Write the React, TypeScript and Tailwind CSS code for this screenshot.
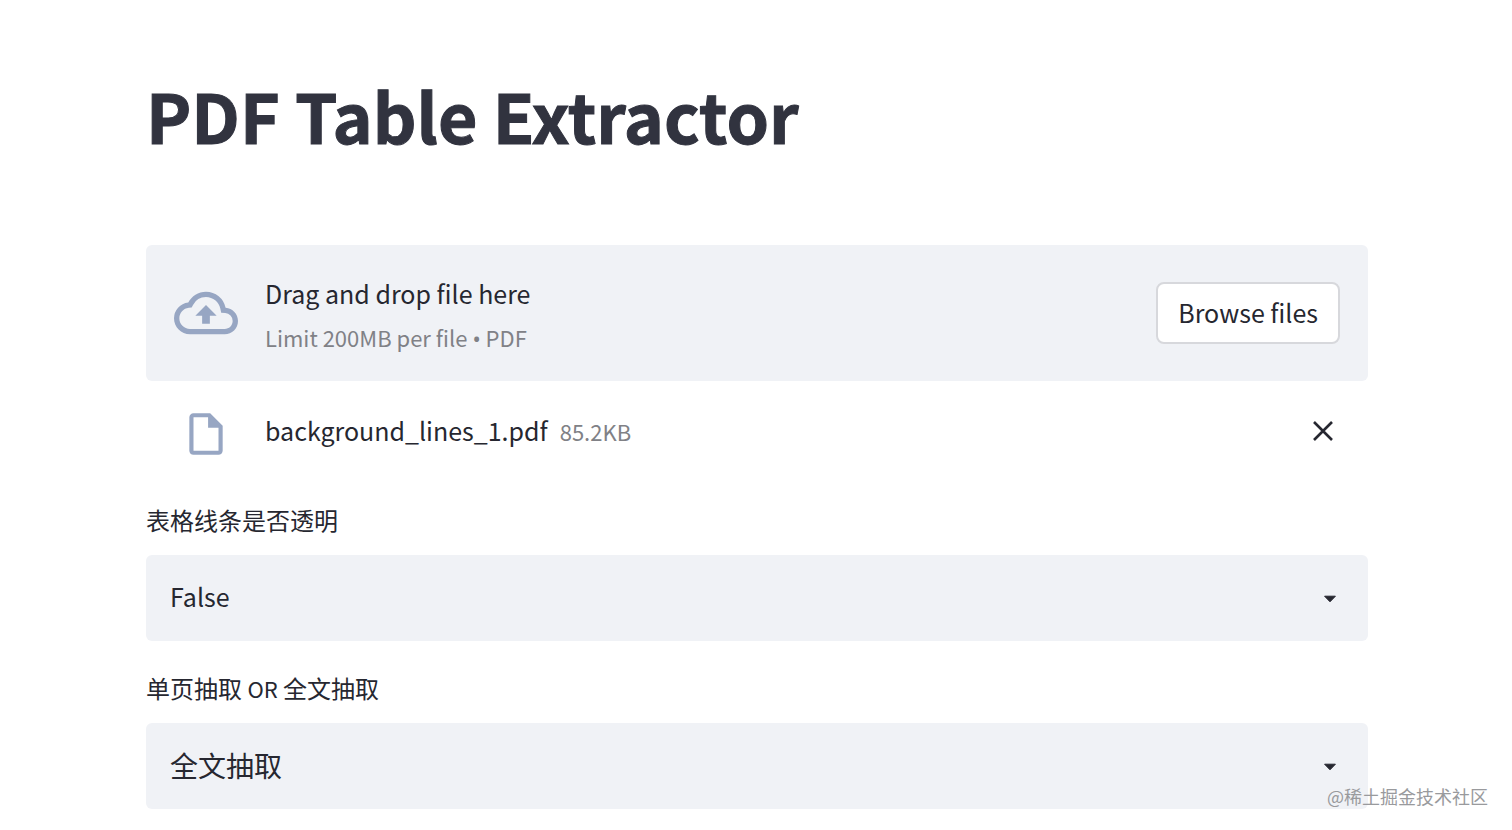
import { useId, useRef, useState } from 'react';
import { MdOutlineCloudUpload, MdOutlineInsertDriveFile } from 'react-icons/md';

const SelectField = ({
  label,
  options,
}: {
  label: string;
  options: string[];
}) => {
  const id = useId();

  return (
    <div className="flex flex-col gap-[18px]">
      <label className="text-[22px] leading-[34px]" htmlFor={id}>
        {label.split(/([A-Z]+)/).map((part, index) => (
          <span
            className={/[A-Z]/.test(part) ? 'text-[22px]' : 'text-[24px]'}
            key={index}
          >
            {part}
          </span>
        ))}
      </label>
      <div className="relative">
        <select
          className="block h-[86px] w-full appearance-none rounded-md bg-[#f0f2f6] px-6 pb-[3px] text-[25px] outline-none [&:lang(zh)]:text-[28px]"
          id={id}
          lang={/[A-Za-z]/.test(options[0]) ? 'en' : 'zh'}
        >
          {options.map((option) => (
            <option key={option}>{option}</option>
          ))}
        </select>
        <svg
          aria-hidden="true"
          className="pointer-events-none absolute top-10 right-[31px] h-2 w-3.5"
          viewBox="0 0 14 8"
        >
          <path
            d="M1.6 1.2h10.8L7 6.8z"
            fill="#262730"
            stroke="#262730"
            strokeLinejoin="round"
          />
        </svg>
      </div>
    </div>
  );
};

const FileUploader = () => {
  const inputRef = useRef<HTMLInputElement>(null);
  const [file, setFile] = useState<{ name: string; size: string } | null>({
    name: 'background_lines_1.pdf',
    size: '85.2KB',
  });

  return (
    <section>
      <div className="flex items-center rounded-md bg-[#f0f2f6] px-7 py-6">
        <MdOutlineCloudUpload className="mr-[27px] shrink-0 text-[#97a6c3]" size={64} />
        <div className="flex flex-1 flex-col gap-1 pt-1">
          <span className="text-[25px] leading-10">
            Drag and drop file here
          </span>
          <span className="text-[22px] leading-10 text-[#808186]">
            Limit 200MB per file{' '}
            <span className="font-['Noto_Sans'] leading-none">•</span> PDF
          </span>
        </div>
        <input
          accept=".pdf"
          aria-label="PDF"
          className="hidden"
          onChange={(event) => {
            const next = event.target.files?.[0];
            if (next) {
              setFile({
                name: next.name,
                size: `${(next.size / 1024).toFixed(1)}KB`,
              });
            }
          }}
          ref={inputRef}
          type="file"
        />
        <button
          className="rounded-lg border-2 border-[#d7d8dc] bg-white px-5 pt-2 pb-[10px] text-[25px] leading-10"
          onClick={() => inputRef.current?.click()}
          type="button"
        >
          Browse files
        </button>
      </div>
      <div className="flex h-[106px] items-center px-7">
        {file && (
          <>
            <div className="mr-[27px] flex w-16 shrink-0 justify-center">
              <MdOutlineInsertDriveFile className="text-[#97a6c3]" size={50} />
            </div>
            <div className="flex flex-1 items-baseline gap-3 pb-2">
              <span className="text-[25px] leading-10">{file.name}</span>
              <span className="text-[22px] leading-10 text-[#808186]">
                {file.size}
              </span>
            </div>
            <button
              aria-label="Remove file"
              className="px-[7px] pt-2 pb-[14px]"
              onClick={() => setFile(null)}
              type="button"
            >
              <svg className="size-5" viewBox="0 0 20 20">
                <path
                  d="M1 1l18 18M19 1L1 19"
                  fill="none"
                  stroke="#262730"
                  strokeWidth="2.6"
                />
              </svg>
            </button>
          </>
        )}
      </div>
    </section>
  );
};

export default function App() {
  return (
    <div className="relative min-h-screen bg-white font-['Noto_Sans_CJK_SC',sans-serif] text-[#262730]">
      <main className="flex flex-col pt-[73px] pr-36 pl-[146px]">
        <h1 className="mb-[88px] text-[68px] leading-[84px] font-bold text-[#31333f] [-webkit-text-stroke:1px_#31333f]">
          PDF Table Extractor
        </h1>
        <FileUploader />
        <div className="mt-4 flex flex-col gap-[30px]">
          <SelectField label="表格线条是否透明" options={['False', 'True']} />
          <SelectField
            label="单页抽取 OR 全文抽取"
            options={['全文抽取', '单页抽取']}
          />
        </div>
      </main>
      <span className="absolute right-6 bottom-5 text-[18px] leading-7 text-[#999a9d]">
        @稀土掘金技术社区
      </span>
    </div>
  );
}
